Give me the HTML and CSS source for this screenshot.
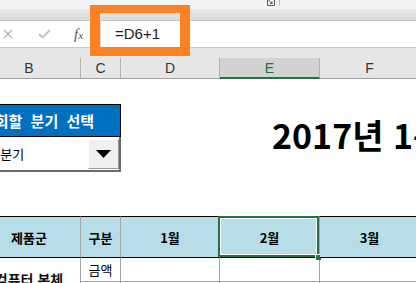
FILE: index.html
```html
<!DOCTYPE html>
<html lang="ko">
<head>
    <meta charset="UTF-8">
    <meta name="viewport" content="width=device-width, initial-scale=1.0">
    <title>분기별 판매 현황</title>
    <link rel="stylesheet" href="styles.css">
</head>
<body>
    <div class="ribbon">
        <svg class="launcher" width="8" height="6" viewBox="0 0 8 6">
            <path d="M0.5 0 V5.5 H7.5 V0" fill="none" stroke="#555" stroke-width="1"/>
            <path d="M1.5 0 L5 3.5 M5 1.5 V3.5 H3" fill="none" stroke="#555" stroke-width="1"/>
        </svg>
        <span class="group-sep"></span>
    </div>
    <div class="ribbon-band"></div>

    <div class="formula-bar">
        <div class="fx-buttons">
            <svg class="btn-cancel" width="10" height="10" viewBox="0 0 10 10">
                <path d="M1 1 L9 9 M9 1 L1 9" stroke="#b3b3b3" stroke-width="1.3"/>
            </svg>
            <svg class="btn-enter" width="13" height="10" viewBox="0 0 13 10">
                <path d="M1 5 L4.5 8.5 L12 1" fill="none" stroke="#c2c2c2" stroke-width="1.8"/>
            </svg>
            <span class="btn-fx">f<small>x</small></span>
        </div>
        <div class="formula-input">=D6+1</div>
    </div>

    <div class="col-headers">
        <div class="col-grid">
            <div class="col-head">B</div>
            <div class="col-head">C</div>
            <div class="col-head">D</div>
            <div class="col-head active">E</div>
            <div class="col-head">F</div>
        </div>
    </div>

    <div class="sheet">
        <div class="top-row">
            <div class="picker">
                <div class="picker-title">조회할 분기 선택</div>
                <div class="combo">
                    <span class="combo-value">1분기</span>
                    <span class="combo-btn">
                        <svg width="15" height="8" viewBox="0 0 15 8"><path d="M0 0 H15 L7.5 8 Z" fill="#000"/></svg>
                    </span>
                </div>
            </div>
            <div class="report-title">2017년 1분기 판매 현황</div>
        </div>

        <div class="table">
            <div class="th">제품군</div>
            <div class="th">구분</div>
            <div class="th">1월</div>
            <div class="th selected">2월</div>
            <div class="th">3월</div>

            <div class="td group">컴퓨터 본체</div>
            <div class="td">금액</div>
            <div class="td"></div>
            <div class="td"></div>
            <div class="td"></div>

            <div class="td">수량</div>
            <div class="td"></div>
            <div class="td"></div>
            <div class="td"></div>
        </div>
    </div>

    <div class="callout"></div>
</body>
</html>
```

FILE: styles.css
```css
body {
    margin: 0;
    width: 416px;
    height: 283px;
    overflow: hidden;
    position: relative;
    background-color: #fff;
    font-family: "Noto Sans CJK KR", "Liberation Sans", sans-serif;
    color: #000;
}

/* ribbon leftovers */
.ribbon {
    height: 9px;
    background-color: #f3f3f3;
    display: flex;
    align-items: flex-start;
    padding-left: 267px;
    gap: 4px;
}
.group-sep {
    width: 1px;
    height: 6px;
    background-color: #c6c6c6;
}
.ribbon-band {
    height: 11px;
    background: linear-gradient(#e8e8e8, #dadada);
    border-bottom: 1px solid #c6c6c6;
}

/* formula bar */
.formula-bar {
    display: flex;
    height: 26px;
    background-color: #fff;
    border-bottom: 1px solid #c8c8c8;
}
.fx-buttons {
    width: 100px;
    display: flex;
    align-items: center;
}
.btn-cancel {
    margin-left: 3px;
}
.btn-enter {
    margin-left: 25px;
}
.btn-fx {
    margin-left: 23px;
    font-family: "Liberation Serif", serif;
    font-style: italic;
    font-size: 15px;
    color: #555;
}
.btn-fx small {
    font-size: 11px;
}
.formula-input {
    flex: 1;
    border-left: 1px solid #d4d4d4;
    padding-left: 14px;
    font-family: "Liberation Sans", sans-serif;
    font-size: 15px;
    line-height: 26px;
    color: #222;
}

/* column letters */
.col-headers {
    background-color: #e6e6e6;
    padding-top: 10px;
}
.col-grid,
.table {
    display: grid;
    grid-template-columns: 103px 40px 99px 100px 100px;
    margin-left: -22px;
}
.col-head {
    box-sizing: border-box;
    height: 21px;
    border-right: 1px solid #b4b4b4;
    border-bottom: 1px solid #a0a0a0;
    text-align: center;
    font-family: "Liberation Sans", sans-serif;
    font-size: 14px;
    line-height: 20px;
    color: #333;
}
.col-head.active {
    background-color: #d2d2d2;
    color: #217346;
    border-bottom: 2px solid #217346;
}

/* sheet */
.sheet {
    padding-top: 25px;
}
.top-row {
    display: flex;
    align-items: flex-start;
    margin-left: -22px;
}
.picker {
    width: 143px;
    flex-shrink: 0;
}
.picker-title {
    box-sizing: border-box;
    height: 33px;
    background-color: #0070c0;
    border: 1px solid #000;
    color: #fff;
    font-size: 15px;
    font-weight: bold;
    line-height: 31px;
    padding-left: 2px;
    white-space: nowrap;
    word-spacing: 4px;
    overflow: hidden;
}
.combo {
    box-sizing: border-box;
    height: 35px;
    display: flex;
    background-color: #fff;
    border-right: 2px solid #6b6b6b;
    border-bottom: 2px solid #6b6b6b;
}
.combo-value {
    flex: 1;
    padding-left: 15px;
    font-size: 13px;
    line-height: 33px;
}
.combo-btn {
    box-sizing: border-box;
    width: 31px;
    margin: 2px 0 1px;
    background-color: #f0f0f0;
    border: 1px solid;
    border-color: #fff #9a9a9a #9a9a9a #fff;
    display: flex;
    justify-content: center;
    align-items: center;
}
.report-title {
    flex-shrink: 0;
    margin-left: 151px;
    margin-top: 11px;
    font-size: 34px;
    font-weight: bold;
    line-height: 40px;
    white-space: nowrap;
}

/* table */
.table {
    margin-top: 44px;
}
.th {
    box-sizing: border-box;
    height: 42px;
    background-color: #b7dee8;
    border-top: 1px solid #000;
    border-bottom: 1px solid #000;
    border-right: 1px solid #a6a6a6;
    display: flex;
    justify-content: center;
    align-items: center;
    font-size: 13px;
    font-weight: bold;
    position: relative;
}
.th.selected::before {
    content: "";
    position: absolute;
    top: -1px;
    left: -2px;
    right: 0;
    bottom: 0;
    border: 2px solid #217346;
    box-shadow: inset 0 0 0 1px #fff;
}
.th.selected::after {
    content: "";
    position: absolute;
    right: -2px;
    bottom: -3px;
    width: 5px;
    height: 5px;
    background-color: #217346;
    border-top: 1px solid #fff;
    border-left: 1px solid #fff;
}
.td {
    box-sizing: border-box;
    height: 24px;
    border-right: 1px solid #a6a6a6;
    border-bottom: 1px solid #a6a6a6;
    display: flex;
    justify-content: center;
    align-items: center;
    font-size: 13px;
}
.td.group {
    grid-row: span 2;
    height: auto;
    padding-bottom: 6px;
    font-size: 14px;
    font-weight: bold;
    color: #111;
}

/* orange annotation frame */
.callout {
    position: absolute;
    left: 90px;
    top: 5px;
    width: 80px;
    height: 34px;
    border: solid #fb8124;
    border-width: 8px 10px 9px;
}
```
